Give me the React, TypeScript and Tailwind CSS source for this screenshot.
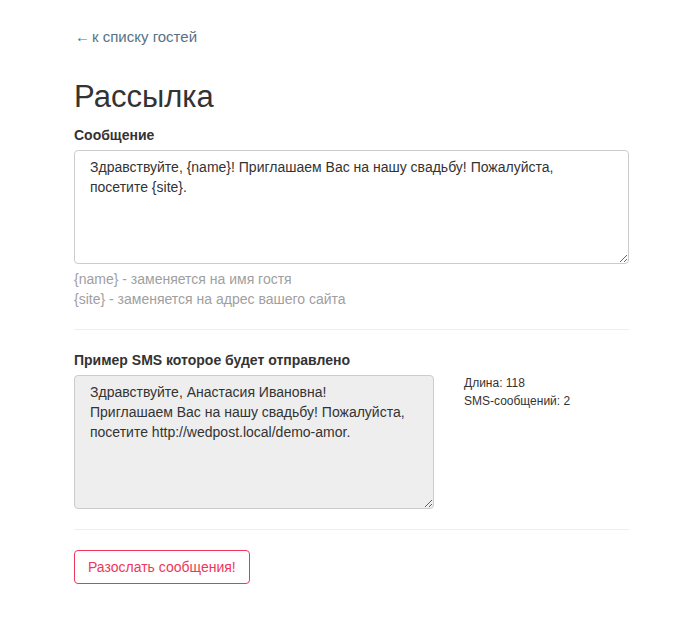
import React from "react";

export default function App() {
  const font = { fontFamily: '"Liberation Sans", Arial, sans-serif' };
  return (
    <div className="min-h-[637px] bg-white text-[14px] leading-[20px] text-[#333]" style={font}>
      <div className="ml-[74px] w-[555px] pt-[27px]">
        <a href="#" className="block text-[15px] leading-[20px] text-[#5a7184]">
          <span className="inline-block w-[18px] pl-px">←</span>к списку гостей
        </a>
        <h1 className="mt-[33px] text-[31px] leading-[33px] font-normal text-[#333]">Рассылка</h1>
        <label className="mt-[12px] block font-bold leading-[20px]">Сообщение</label>
        <textarea
          className="mt-[5px] block h-[114px] w-full rounded-[4px] border border-[#ccc] px-[15px] py-[6px] text-[14px] leading-[20px] text-[#333] outline-none"
          style={font}
          defaultValue={"Здравствуйте, {name}! Приглашаем Вас на нашу свадьбу! Пожалуйста,\nпосетите {site}."}
        />
        <div className="mt-[5px] text-[14px] leading-[20px] text-[#a0a0a0]">
          <div>{"{name} - заменяется на имя гостя"}</div>
          <div>{"{site} - заменяется на адрес вашего сайта"}</div>
        </div>
        <hr className="mt-[20px] border-t border-[#eee]" />
        <label className="mt-[20px] block font-bold leading-[20px]">Пример SMS которое будет отправлено</label>
        <div className="mt-[5px] flex gap-[30px]">
          <textarea
            readOnly
            className="block h-[134px] w-[360px] rounded-[4px] border border-[#ccc] bg-[#eee] px-[15px] py-[6px] text-[14px] leading-[20px] text-[#333] outline-none"
            style={font}
            defaultValue={"Здравствуйте, Анастасия Ивановна!\nПриглашаем Вас на нашу свадьбу! Пожалуйста,\nпосетите http://wedpost.local/demo-amor."}
          />
          <div className="-mt-px text-[12px] leading-[18px] text-[#333]">
            <div>Длина: 118</div>
            <div>SMS-сообщений: 2</div>
          </div>
        </div>
        <hr className="mt-[20px] border-t border-[#eee]" />
        <button
          className="mt-[20px] h-[34px] rounded-[4px] border border-[#f0365a] bg-white px-[13px] text-[14px] leading-[20px] text-[#f0365a]"
          style={font}
        >
          Разослать сообщения!
        </button>
      </div>
    </div>
  );
}
